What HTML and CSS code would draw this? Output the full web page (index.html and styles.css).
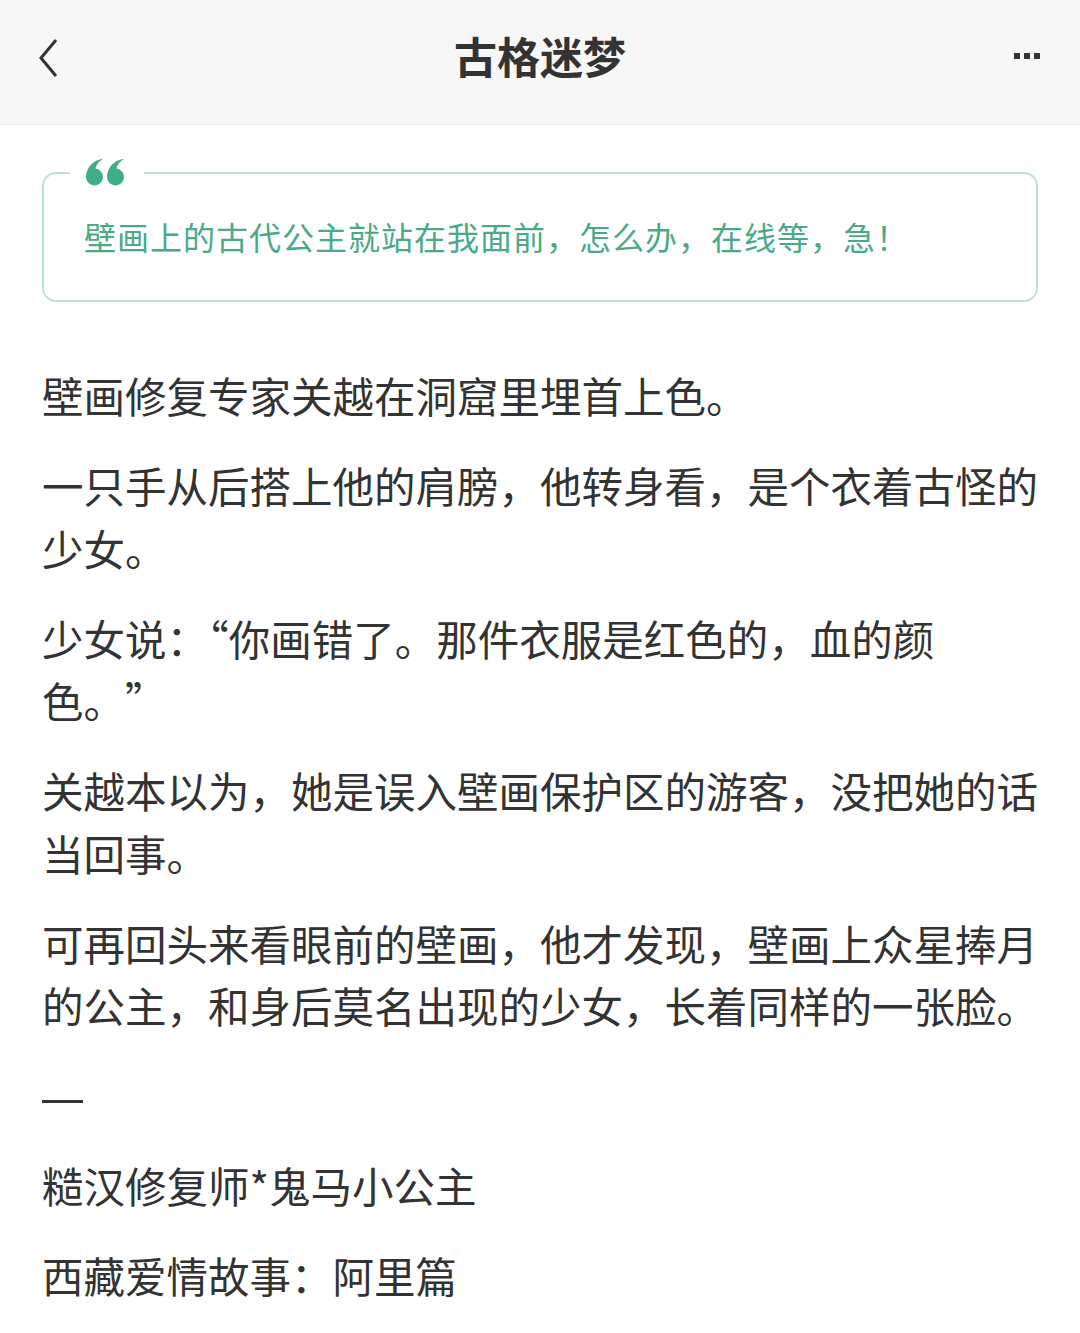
FILE: index.html
```html
<!DOCTYPE html>
<html lang="zh-CN">

<head>
    <meta charset="UTF-8">
    <meta name="viewport" content="width=device-width, initial-scale=1.0">
    <title>古格迷梦</title>
    <link rel="stylesheet" href="styles.css">
</head>

<body>
    <div class="nav-bar">
        <a class="nav-back" href="#">
            <svg width="22" height="40" viewBox="0 0 22 40">
                <polyline points="18,2 3,20 18,38" fill="none" stroke="#333" stroke-width="3" stroke-linejoin="miter" />
            </svg>
        </a>
        <h1 class="nav-title">古格迷梦</h1>
        <a class="nav-more" href="#">
            <span></span><span></span><span></span>
        </a>
    </div>

    <div class="article">
        <div class="quote-box">
            <div class="quote-mark">
                <svg width="44" height="28" viewBox="0 0 44 28">
                    <g fill="#3fae88">
                        <circle cx="9.5" cy="19" r="8.5" />
                        <path d="M1.2 19 C1.2 9 8 2.5 18.5 0.5 C13 4 10.5 8 10.5 12 Z" />
                        <circle cx="30.5" cy="19" r="8.5" />
                        <path d="M22.2 19 C22.2 9 29 2.5 39.5 0.5 C34 4 31.5 8 31.5 12 Z" />
                    </g>
                </svg>
            </div>
            <p class="quote-text">壁画上的古代公主就站在我面前，怎么办，在线等，急！</p>
        </div>

        <div class="content">
            <p>壁画修复专家关越在洞窟里埋首上色。</p>
            <p>一只手从后搭上他的肩膀，他转身看，是个衣着古怪的少女。</p>
            <p>少女说：“你画错了。那件衣服是红色的，血的颜色<span class="full">。”</span></p>
            <p>关越本以为，她是误入壁画保护区的游客，没把她的话当回事。</p>
            <p>可再回头来看眼前的壁画，他才发现，壁画上众星捧月的公主，和身后莫名出现的少女，长着同样的一张脸。</p>
            <p><span class="dash"></span></p>
            <p>糙汉修复师*鬼马小公主</p>
            <p>西藏爱情故事：阿里篇</p>
        </div>
    </div>
</body>

</html>
```

FILE: styles.css
```css
* {
    margin: 0;
    padding: 0;
    box-sizing: border-box;
}

body {
    font-family: "Noto Sans CJK SC", "Noto Sans", sans-serif;
    background: #fff;
    color: #333;
    width: 1080px;
}

/* Top navigation */
.nav-bar {
    height: 125px;
    background: #f7f7f7;
    border-bottom: 1px solid #ebebeb;
    display: flex;
    align-items: center;
    justify-content: space-between;
    padding: 0 38px 0 38px;
}

.nav-back {
    display: flex;
    width: 60px;
    margin-top: -8px;
}

.nav-title {
    font-size: 43px;
    font-weight: 700;
    color: #333;
    margin-top: -14px;
}

.nav-more {
    width: 60px;
    display: flex;
    justify-content: flex-end;
    gap: 4px;
    margin-top: -12px;
    padding-right: 2px;
}

.nav-more span {
    width: 6px;
    height: 6px;
    background: #333;
}

/* Article body */
.article {
    padding: 47px 38px 0 42px;
}

.quote-box {
    position: relative;
    width: 996px;
    border: 2px solid #bfe3d6;
    border-radius: 14px;
    padding: 42px 40px 44px;
}

.quote-mark {
    position: absolute;
    top: -16px;
    left: 26px;
    background: #fff;
    padding: 0 15px;
    line-height: 0;
}

.quote-text {
    font-size: 32px;
    line-height: 40px;
    letter-spacing: 1px;
    color: #4aaa88;
}

.content {
    margin-top: 62px;
}

.content p {
    font-size: 41.5px;
    line-height: 62.5px;
    margin-bottom: 27.5px;
    color: #333;
}

/* keep the full stop at full width before the closing quote */
.full {
    text-spacing-trim: space-all;
}

.dash {
    display: inline-block;
    width: 41px;
    height: 3px;
    background: #333;
    vertical-align: middle;
}
```
